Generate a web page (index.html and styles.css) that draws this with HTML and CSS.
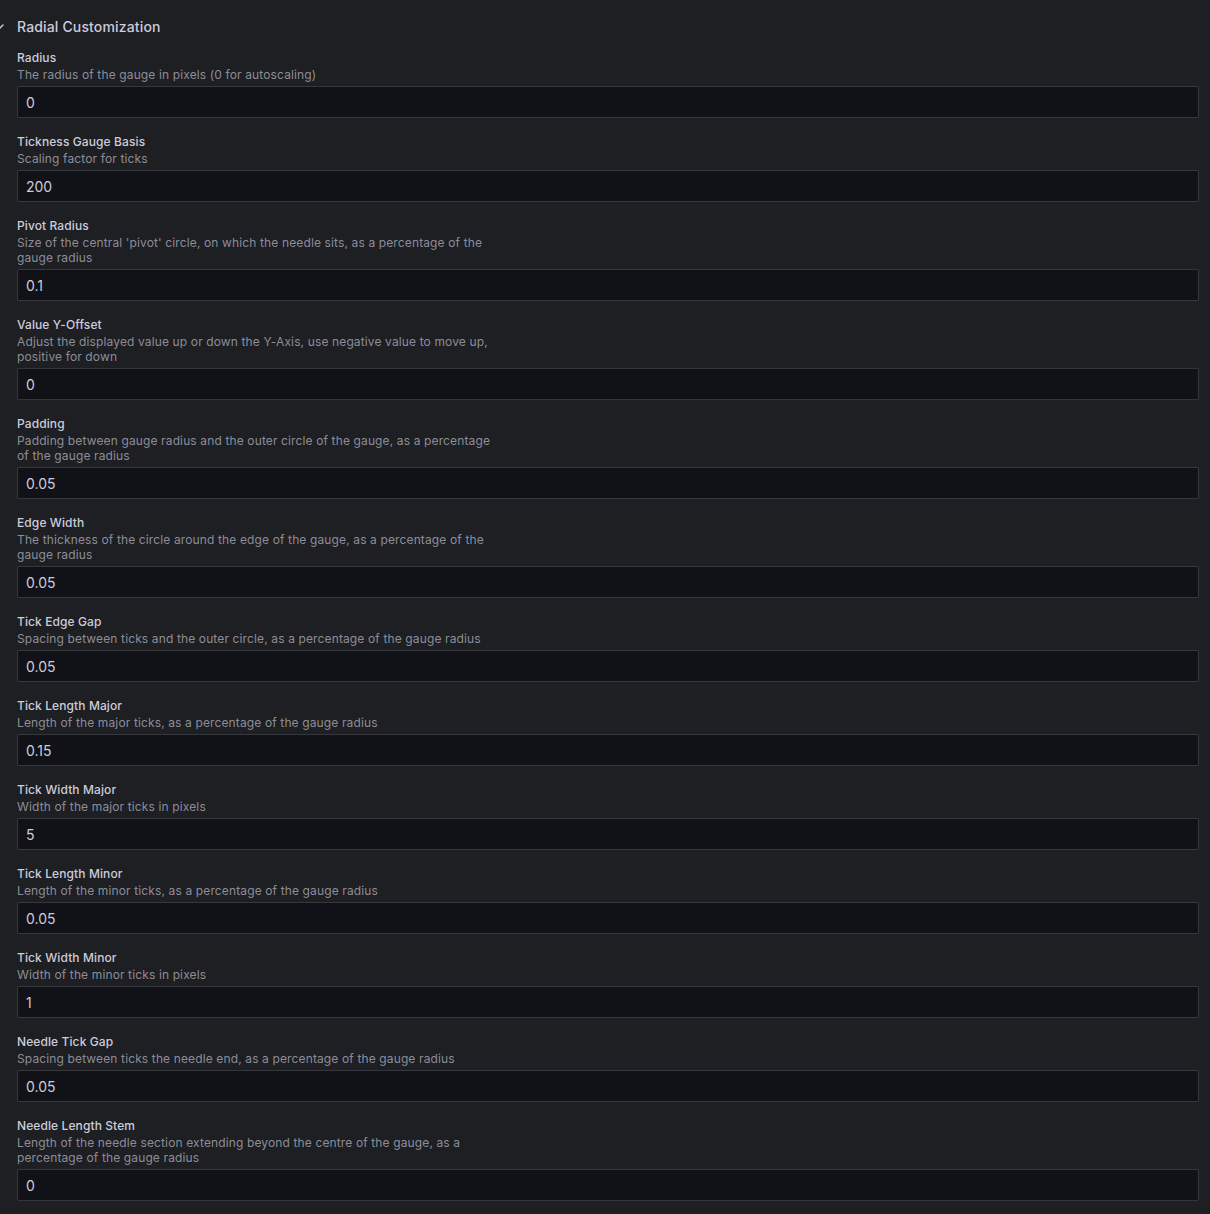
FILE: index.html
```html
<!DOCTYPE html>
<html>
<head>
<meta charset="utf-8">
<link rel="stylesheet" href="styles.css">
</head>
<body>
<div class="pane">
  <div class="cat-header">
    <svg class="chev" viewBox="0 0 16 16" width="16" height="16"><path d="M4 6l4 4 4-4" fill="none" stroke="#ccccdc" stroke-width="1.4" stroke-linecap="round" stroke-linejoin="round"/></svg>
    <span class="cat-title">Radial Customization</span>
  </div>
  <div class="fields">
    <div class="field"><div class="label">Radius</div><div class="desc">The radius of the gauge in pixels (0 for autoscaling)</div><input class="input" value="0"></div>
    <div class="field"><div class="label">Tickness Gauge Basis</div><div class="desc">Scaling factor for ticks</div><input class="input" value="200"></div>
    <div class="field"><div class="label">Pivot Radius</div><div class="desc">Size of the central 'pivot' circle, on which the needle sits, as a percentage of the gauge radius</div><input class="input" value="0.1"></div>
    <div class="field"><div class="label">Value Y-Offset</div><div class="desc">Adjust the displayed value up or down the Y-Axis, use negative value to move up, positive for down</div><input class="input" value="0"></div>
    <div class="field"><div class="label">Padding</div><div class="desc">Padding between gauge radius and the outer circle of the gauge, as a percentage of the gauge radius</div><input class="input" value="0.05"></div>
    <div class="field"><div class="label">Edge Width</div><div class="desc">The thickness of the circle around the edge of the gauge, as a percentage of the gauge radius</div><input class="input" value="0.05"></div>
    <div class="field"><div class="label">Tick Edge Gap</div><div class="desc">Spacing between ticks and the outer circle, as a percentage of the gauge radius</div><input class="input" value="0.05"></div>
    <div class="field"><div class="label">Tick Length Major</div><div class="desc">Length of the major ticks, as a percentage of the gauge radius</div><input class="input" value="0.15"></div>
    <div class="field"><div class="label">Tick Width Major</div><div class="desc">Width of the major ticks in pixels</div><input class="input" value="5"></div>
    <div class="field"><div class="label">Tick Length Minor</div><div class="desc">Length of the minor ticks, as a percentage of the gauge radius</div><input class="input" value="0.05"></div>
    <div class="field"><div class="label">Tick Width Minor</div><div class="desc">Width of the minor ticks in pixels</div><input class="input" value="1"></div>
    <div class="field"><div class="label">Needle Tick Gap</div><div class="desc">Spacing between ticks the needle end, as a percentage of the gauge radius</div><input class="input" value="0.05"></div>
    <div class="field"><div class="label">Needle Length Stem</div><div class="desc">Length of the needle section extending beyond the centre of the gauge, as a percentage of the gauge radius</div><input class="input" value="0"></div>
  </div>
</div>
</body>
</html>
```

FILE: styles.css
```css
html, body {
  margin: 0;
  padding: 0;
  background: #1e1f23;
}
body {
  font-family: Inter, "Noto Sans", sans-serif;
  color: #ccccdc;
  overflow: hidden;
}
.pane {
  padding: 0 11px 0 17px;
}
.cat-header {
  display: flex;
  align-items: center;
  height: 20px;
  padding-top: 17px;
  margin-bottom: 13px;
}
.chev {
  margin-left: -26px;
  margin-right: 10px;
  flex: none;
}
.cat-title {
  font-size: 14px;
  font-weight: 500;
  line-height: 20px;
  letter-spacing: 0.15px;
  color: #ccccdc;
}
.fields {
  display: flex;
  flex-direction: column;
}
.field {
  display: flex;
  flex-direction: column;
  margin-bottom: 16px;
}
.label {
  font-size: 12px;
  font-weight: 500;
  line-height: 15px;
  letter-spacing: 0.1px;
  color: #ccccdc;
}
.desc {
  font-size: 12px;
  font-weight: 400;
  line-height: 15px;
  letter-spacing: 0.13px;
  color: rgba(204, 204, 220, 0.65);
  max-width: 480px;
  margin-top: 2px;
  margin-bottom: 4px;
}
.input {
  box-sizing: border-box;
  height: 32px;
  width: 100%;
  background: #111217;
  border: 1px solid rgba(204, 204, 220, 0.2);
  border-radius: 2px;
  padding: 0 8px;
  font-family: Inter, "Noto Sans", sans-serif;
  font-size: 14px;
  color: #ccccdc;
  outline: none;
}
```
